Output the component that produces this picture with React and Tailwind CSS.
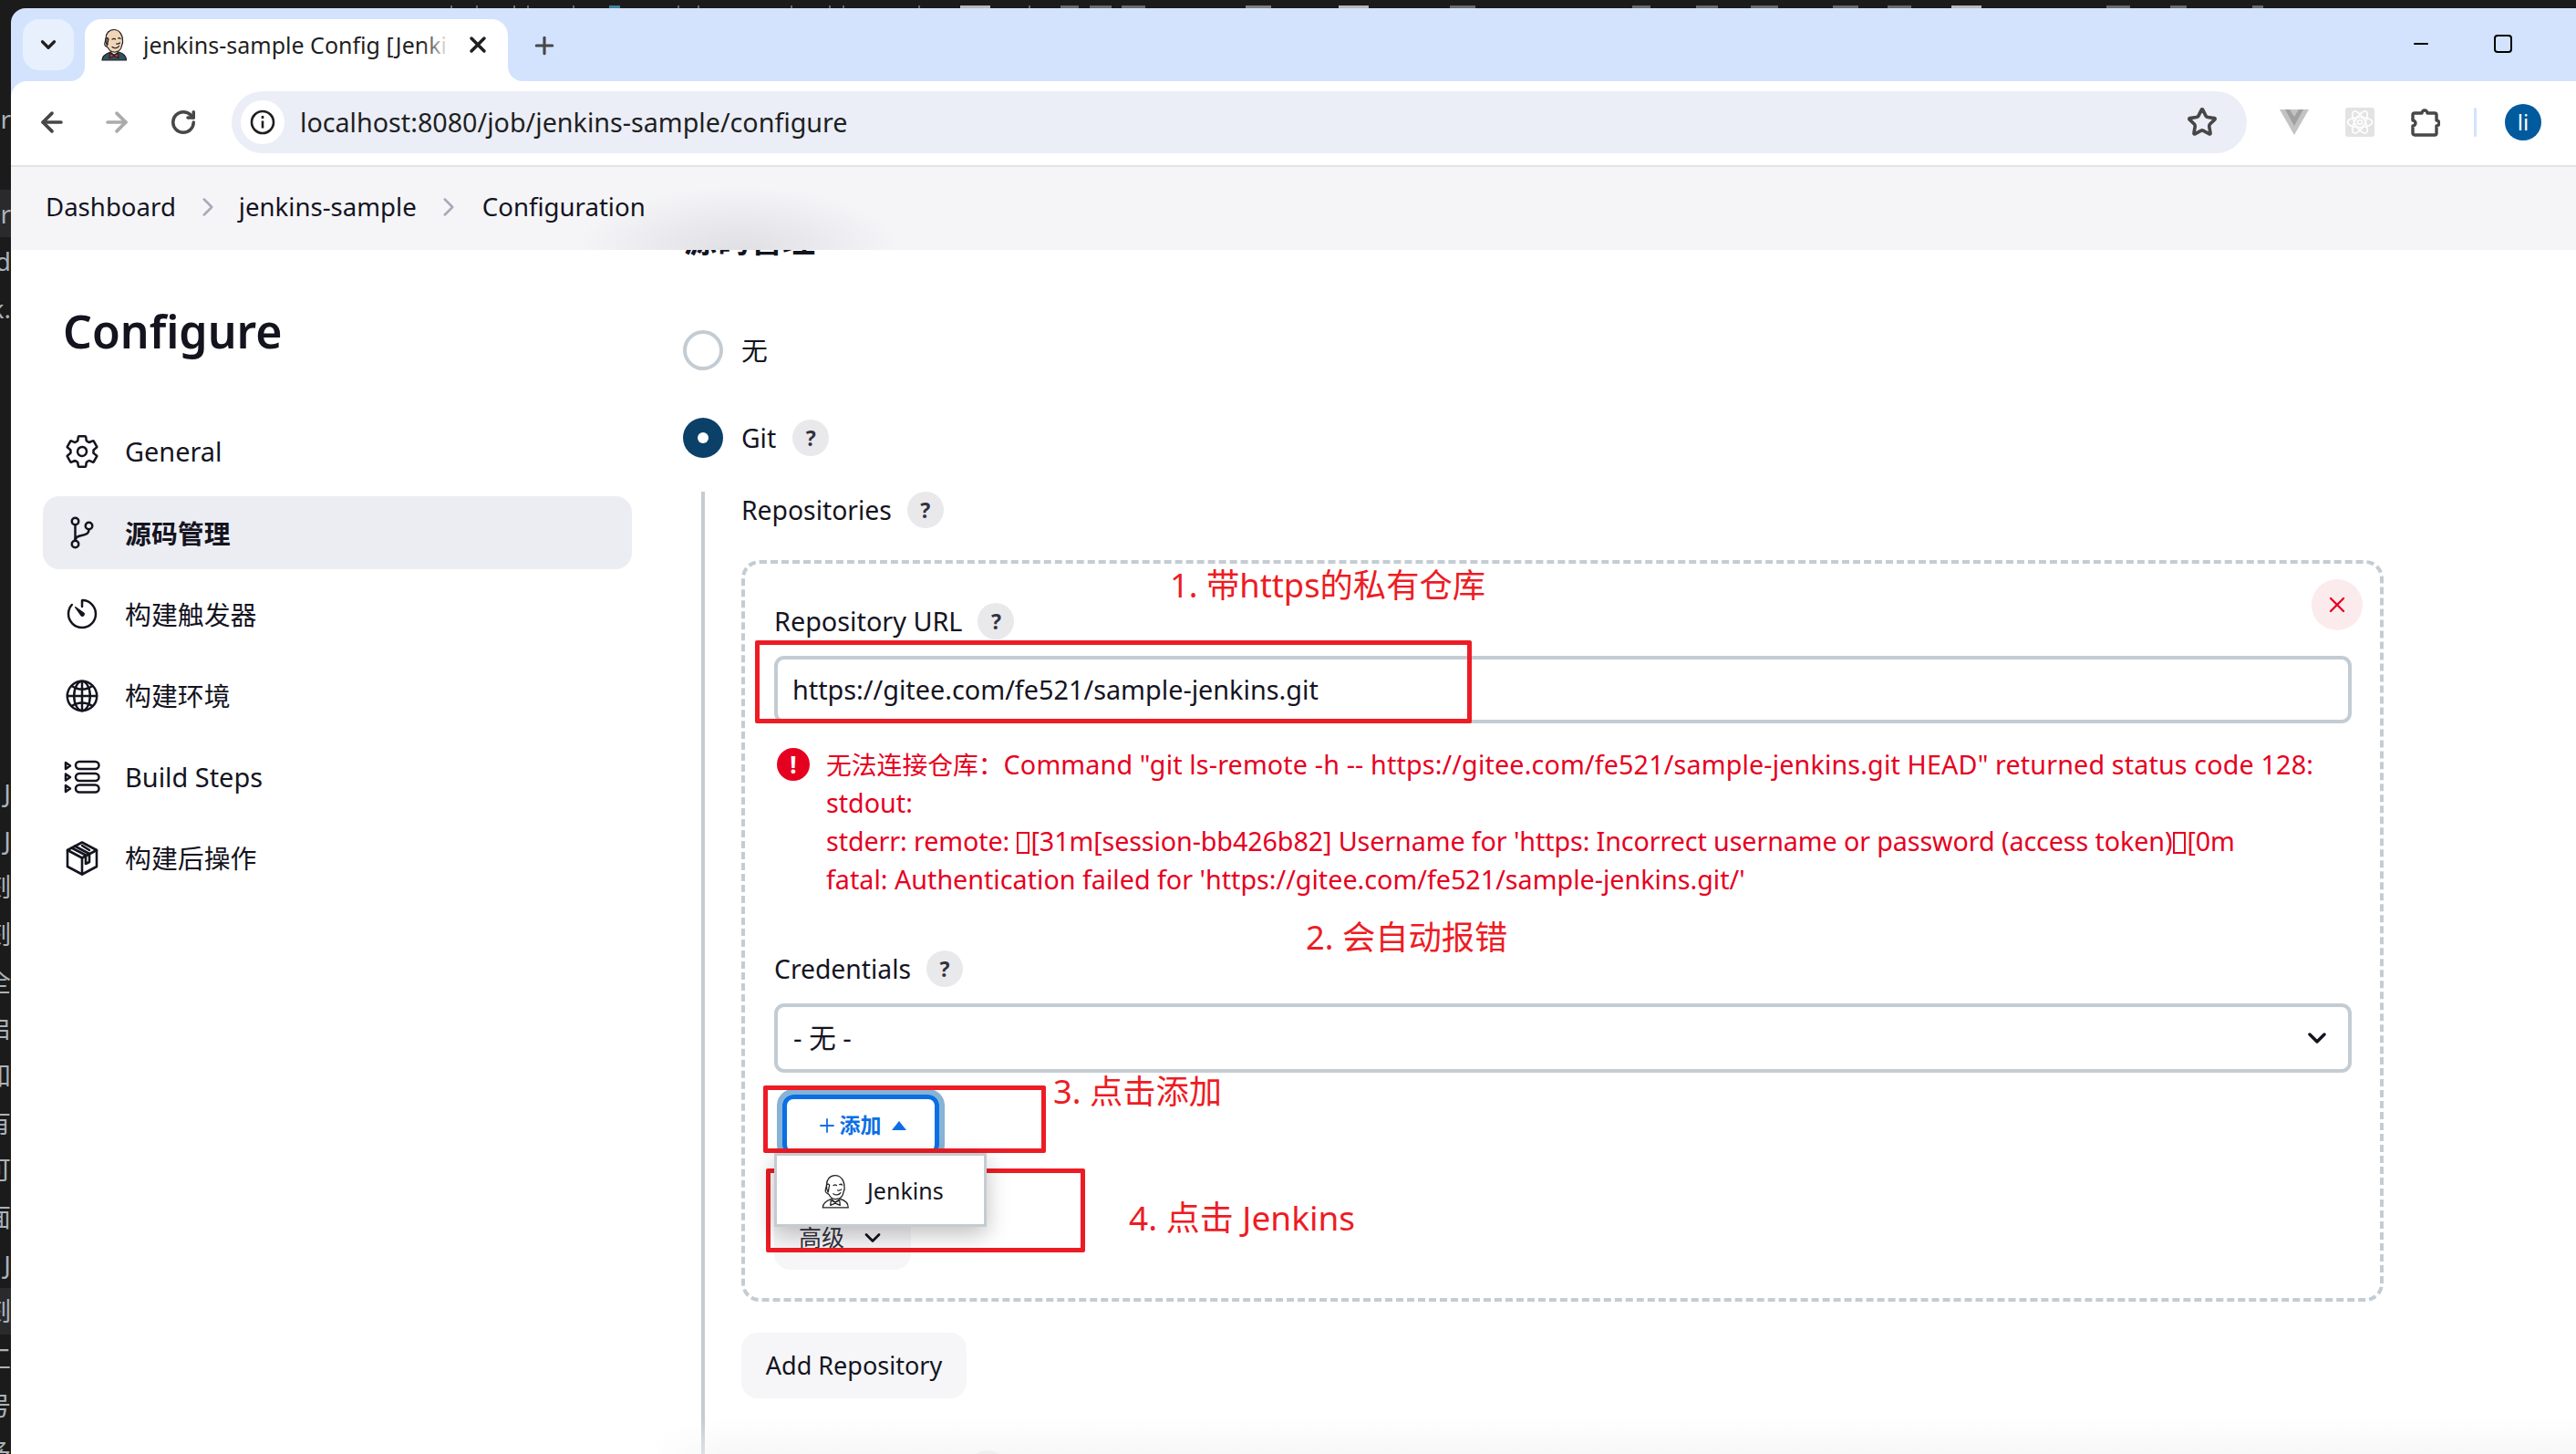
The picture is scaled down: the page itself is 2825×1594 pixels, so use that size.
import React from "react";
import { ArrowLeft, ArrowRight, RotateCw, Star, ChevronDown, ChevronRight, Plus, X, Minus } from "lucide-react";
import { IoSettingsOutline, IoGitBranchOutline, IoTimerOutline, IoGlobeOutline } from "react-icons/io5";

const Jenkins = ({ color, className }) => {
  const skin = color ? "#f0d6b7" : "#ffffff";
  const suit = color ? "#335061" : "#ffffff";
  const tie = color ? "#d33833" : "#ffffff";
  const hair = color ? "#8a8a8a" : "#ffffff";
  return (
    <svg viewBox="0 0 64 72" className={className} fill="none" stroke="#231f20" strokeWidth="2.4" strokeLinejoin="round" strokeLinecap="round">
      <path d="M6 70c0-9 7-14 18-18l8 7 10-7c11 3 17 8 17 18z" fill={suit} />
      <path d="M32 3c-11 0-18 8-18 20 0 5-4 9-2 14 2 4 5 3 7 6 4 7 10 10 16 9 8-1 13-7 14-14 1-3 3-6 2-11C51 13 43 3 32 3z" fill={skin} />
      <path d="M14 23c-1 6 1 11 3 15 2-5 1-10 3-14-1-3-4-4-6-1z" fill={hair} />
      <path d="M28 24c3-2 5-2 7 0M41 22c2-1 4-1 5 1M37 34c3 1 6 0 8-2M28 41c5 4 12 3 15-2" />
      <path d="M23 55l9 4 9-4 1 10-10-4-10 4z" fill={tie} />
    </svg>
  );
};

const Help = () => (
  <span className="flex h-[40px] w-[40px] shrink-0 items-center justify-center rounded-full bg-[#e9e9ec] text-[23px] font-bold text-[#33333d]">?</span>
);

const Tofu = () => <span className="mx-[1px] inline-block h-[24px] w-[14px] border-2 border-[#e6001f] align-[-3px]" />;

const BuildSteps = () => (
  <svg viewBox="0 0 40 40" className="h-[40px] w-[40px]" fill="none" stroke="#14141f" strokeWidth="2.5" strokeLinejoin="round">
    <path d="M2 4l5 3.500-5 3.500zM2 16.500l5 3.500-5 3.500zM2 29l5 3.500-5 3.500z" />
    <rect x="13" y="3" width="25.500" height="8" rx="4" />
    <rect x="13" y="16" width="25.500" height="8" rx="4" />
    <rect x="13" y="28.500" width="25.500" height="8" rx="4" />
  </svg>
);

const Cube = () => (
  <svg viewBox="0 0 40 40" className="h-[40px] w-[40px]" fill="none" stroke="#14141f" strokeWidth="2.6" strokeLinejoin="round" strokeLinecap="round">
    <path d="M20 2.500L36 11v18l-16 8.500L4 29V11z" />
    <path d="M4 11l16 8.500L36 11M20 19.500v18" />
    <path d="M12 6.500l16 8.500v9l-4 2v-9.500L8.500 8.500M20 6l8 5" />
  </svg>
);

const navItems = [
  { icon: <IoSettingsOutline className="h-[42px] w-[42px]" />, label: "General" },
  { icon: <IoGitBranchOutline className="h-[44px] w-[44px]" />, label: "源码管理", active: true },
  { icon: <IoTimerOutline className="h-[42px] w-[42px]" />, label: "构建触发器" },
  { icon: <IoGlobeOutline className="h-[42px] w-[42px]" />, label: "构建环境" },
  { icon: <BuildSteps />, label: "Build Steps" },
  { icon: <Cube />, label: "构建后操作" },
];

const upperLines = [[".r", ""], ["", ""], ["hr", "bg-[#2a2a2d]"], ["od", ""], ["k.", ""]];
const lowerLines = [
  ["J", ""], ["J", ""], ["刂刻", ""], ["刂刻", ""], ["安全", ""], ["重启", ""], ["告知", ""], ["只有", ""],
  ["只可", ""], ["面面", ""], ["J", ""], ["刂刻", "bg-[#2a2a2d]"], ["立工", ""], ["己号", ""], ["更多", ""],
];

const topMarks = [
  [494, 2, "#6a6a6a"], [522, 2, "#6a6a6a"], [563, 2, "#776"], [578, 2, "#6a6a6a"], [628, 2, "#6a6a6a"], [668, 12, "#3f7f9f"], [743, 2, "#6a6a6a"],
  [765, 2, "#6a6a6a"], [867, 2, "#6a6a6a"], [909, 2, "#6a6a6a"], [924, 2, "#6a6a6a"], [1007, 2, "#6a6a6a"], [1053, 33, "#b8b8b8"], [1128, 2, "#6a6a6a"],
  [1163, 20, "#6a6a6a"], [1195, 24, "#6a6a6a"], [1230, 26, "#6a6a6a"], [1366, 28, "#808080"], [1468, 33, "#b8b8b8"], [1590, 28, "#6a6a6a"],
  [1790, 20, "#6a6a6a"], [1860, 24, "#6a6a6a"], [1920, 30, "#6a6a6a"], [2010, 28, "#6a6a6a"], [2070, 26, "#6a6a6a"], [2140, 33, "#b8b8b8"],
  [2310, 26, "#6a6a6a"], [2380, 18, "#6a6a6a"], [2470, 12, "#6a6a6a"],
];

const Red = ({ className }) => <div className={"pointer-events-none absolute rounded-[2px] border-[5px] border-[#ed1c24] " + className} />;
const Note = ({ className, children }) => (
  <div className={"pointer-events-none absolute whitespace-nowrap leading-[48px] text-[#ed1c24] " + className}>{children}</div>
);

const StrayLine = ({ text, cls, h }) => (
  <div className={"flex items-center justify-end overflow-hidden whitespace-nowrap text-[28px] leading-none " + h + " " + cls}>
    <span className="shrink-0">{text}</span>
  </div>
);

export default function App() {
  return (
    <div className="relative h-[1594px] w-[2825px] overflow-hidden bg-[#1b1b1b] text-[#14141f] [font-family:'Noto_Sans','Noto_Sans_CJK_SC',sans-serif]">
      {/* stray marks of the window behind */}
      <div className="absolute left-0 right-0 top-[6px] h-[3px]">
        {topMarks.map(([x, w, c], i) => (
          <span key={i} className="absolute bottom-0 top-0" style={{ left: x, width: w, background: c }} />
        ))}
      </div>
      <div className="flex h-full">
        <div className="w-[12px] shrink-0 overflow-hidden pt-[104px] text-[#aab2ba]">
          {upperLines.map(([t, c], i) => <StrayLine key={i} text={t} cls={c} h="h-[52px]" />)}
          <div className="h-[479px]" />
          {lowerLines.map(([t, c], i) => <StrayLine key={i} text={t} cls={c} h="h-[51.700px]" />)}
        </div>

        <div className="mt-[9px] flex h-[1585px] min-w-0 flex-1 flex-col overflow-hidden rounded-tl-[16px] bg-[#d3e3fd]">
          {/* Tab strip */}
          <div className="flex h-[80px] shrink-0 items-start pl-[13px] pt-[12px]">
            <div className="flex h-[56px] w-[56px] items-center justify-center rounded-[18px] bg-[#e8f0fe]">
              <ChevronDown className="h-[26px] w-[26px] text-[#1f1f1f]" strokeWidth={3} />
            </div>
            <div className="relative ml-[12px] flex h-[68px] w-[464px] items-start rounded-t-[18px] bg-white pl-[16px] pt-[10px]">
              <div className="absolute bottom-0 left-[-16px] h-[16px] w-[16px] bg-white"><div className="h-full w-full rounded-br-[16px] bg-[#d3e3fd]" /></div>
              <div className="absolute bottom-0 right-[-16px] h-[16px] w-[16px] bg-white"><div className="h-full w-full rounded-bl-[16px] bg-[#d3e3fd]" /></div>
              <Jenkins color className="h-[36px] w-[32px] shrink-0" />
              <div className="relative ml-[16px] h-[36px] w-[336px] overflow-hidden whitespace-nowrap text-[25px] leading-[36px] text-[#1f1f1f]">
                jenkins-sample Config [Jenkins]
                <div className="absolute bottom-0 right-0 top-0 w-[30px] bg-gradient-to-r from-transparent to-white" />
              </div>
              <X className="ml-[17px] mt-[4px] h-[28px] w-[28px] shrink-0 text-[#1f1f1f]" strokeWidth={3} />
            </div>
            <Plus className="ml-[25px] mt-[14px] h-[30px] w-[30px] text-[#474747]" strokeWidth={2.5} />
            <div className="flex-1" />
            <Minus className="mt-[15px] h-[24px] w-[24px] text-black" strokeWidth={2} />
            <div className="ml-[68px] mr-[70px] mt-[17px] h-[20px] w-[20px] rounded-[4px] border-2 border-black" />
          </div>

          {/* Toolbar */}
          <div className="flex h-[94px] shrink-0 items-center rounded-tl-[18px] border-b-2 border-[#e3e3e3] bg-white pb-[2px]">
            <ArrowLeft className="ml-[28px] h-[34px] w-[34px] text-[#474747]" strokeWidth={2.6} />
            <ArrowRight className="ml-[37px] h-[34px] w-[34px] text-[#ababab]" strokeWidth={2.6} />
            <RotateCw className="ml-[41px] h-[30px] w-[30px] text-[#474747]" strokeWidth={2.8} />
            <div className="ml-[38px] flex h-[68px] w-[2210px] items-center rounded-full bg-[#ebeef7] pl-[10px]">
              <div className="flex h-[48px] w-[48px] items-center justify-center rounded-full bg-white">
                <svg viewBox="0 0 28 28" className="h-[28px] w-[28px]" fill="none" stroke="#1f1f1f" strokeWidth="2.6">
                  <circle cx="14" cy="14" r="12" />
                  <path d="M14 12.500v8M14 7v3" />
                </svg>
              </div>
              <span className="ml-[17px] text-[28.700px] text-[#1f1f1f]">localhost:8080/job/jenkins-sample/configure</span>
              <div className="flex-1" />
              <Star className="mr-[32px] h-[34px] w-[34px] text-[#474747]" strokeWidth={2.6} />
            </div>
            <svg viewBox="0 0 32 28" className="ml-[36px] h-[28px] w-[32px] shrink-0">
              <path d="M0 0h32L16 28z" fill="#c3c3c3" />
              <path d="M6 0h20L16 18z" fill="#a0a0a0" />
              <path d="M11 0h10l-5 8z" fill="#c3c3c3" />
            </svg>
            <div className="ml-[40px] flex h-[32px] w-[32px] shrink-0 items-center justify-center rounded-[3px] bg-[#e3e3e3]">
              <svg viewBox="0 0 32 32" className="h-[32px] w-[32px]" fill="none" stroke="#ffffff" strokeWidth="1.600">
                <ellipse cx="16" cy="16" rx="13.500" ry="5.500" />
                <ellipse cx="16" cy="16" rx="13.500" ry="5.500" transform="rotate(60 16 16)" />
                <ellipse cx="16" cy="16" rx="13.500" ry="5.500" transform="rotate(120 16 16)" />
                <circle cx="16" cy="16" r="2.500" />
              </svg>
            </div>
            <svg viewBox="0 0 34 34" className="ml-[38px] h-[34px] w-[34px] shrink-0" fill="none" stroke="#474747" strokeWidth="3.400" strokeLinejoin="round">
              <path d="M6 7h8a3 3 0 0 1 6 0h8a2 2 0 0 1 2 2v6a3 3 0 0 1 0 6v8a2 2 0 0 1-2 2H6a2 2 0 0 1-2-2v-8a3 3 0 0 0 0-6V9a2 2 0 0 1 2-2z" />
            </svg>
            <div className="ml-[37px] h-[32px] w-[3px] shrink-0 rounded-full bg-[#d3e3fd]" />
            <div className="ml-[31px] flex h-[40px] w-[40px] shrink-0 items-center justify-center rounded-full bg-[#005a9e] text-[24px] text-white">li</div>
          </div>

          {/* Page */}
          <div className="relative min-h-0 flex-1 overflow-hidden bg-white">
            <div className="absolute left-0 right-0 top-0 z-10 flex h-[91px] items-center bg-[#f5f5f8] pb-[3px] pl-[38px] text-[27.600px]">
              <div className="absolute bottom-0 left-[618px] h-[70px] w-[360px] bg-[radial-gradient(ellipse_at_bottom,#dfdfe4,transparent_70%)]" />
              <span className="relative">Dashboard</span>
              <ChevronRight className="relative ml-[18px] h-[34px] w-[34px] text-[#a9a9b8]" strokeWidth={1.800} />
              <span className="relative ml-[17px]">jenkins-sample</span>
              <ChevronRight className="relative ml-[18px] h-[34px] w-[34px] text-[#a9a9b8]" strokeWidth={1.800} />
              <span className="relative ml-[20px]">Configuration</span>
            </div>

            <div className="flex">
              {/* Sidebar */}
              <div className="ml-[35px] w-[646px] shrink-0 pt-[150px]">
                <h1 className="ml-[22px] h-[60px] text-[50px] font-semibold leading-[60px]">Configure</h1>
                <div className="mt-[62px] flex flex-col gap-[9.200px]">
                  {navItems.map((it) => (
                    <div key={it.label} className={"flex h-[80px] items-center rounded-[18px] pl-[23px] text-[28.900px] " + (it.active ? "bg-[#ecedf2] font-bold" : "")}>
                      <span className="flex w-[40px] shrink-0 justify-center">{it.icon}</span>
                      <span className="ml-[27px]">{it.label}</span>
                    </div>
                  ))}
                </div>
              </div>

              {/* Main */}
              <div className="ml-[56px] w-[1900px] shrink-0 pt-[59px] text-[28.300px]">
                <div className="ml-[1px] h-[44px] text-[36px] font-bold leading-[44px]">源码管理</div>

                <div className="mt-[76px] flex h-[44px] items-center">
                  <span className="h-[44px] w-[44px] shrink-0 rounded-full border-[4px] border-[#c4ccd3]" />
                  <span className="ml-[20px] text-[28.800px]">无</span>
                </div>
                <div className="mt-[52px] flex h-[44px] items-center">
                  <span className="flex h-[44px] w-[44px] shrink-0 items-center justify-center rounded-full bg-[#0b4168]">
                    <span className="h-[12px] w-[12px] rounded-full bg-white" />
                  </span>
                  <span className="ml-[20px]">Git</span>
                  <span className="ml-[18px]"><Help /></span>
                </div>

                <div className="ml-[20px] mt-[37px] border-l-4 border-[#c4ccd3] pl-[40px]">
                  <div className="flex h-[40px] items-center">
                    <span>Repositories</span>
                    <span className="ml-[17px]"><Help /></span>
                  </div>

                  <div className="relative mt-[35px] w-[1801px] rounded-[20px] border-4 border-dashed border-[#c4ccd3] px-[32px] pb-[31px] pt-[43px]">
                    <div className="absolute right-[19px] top-[17px] flex h-[56px] w-[56px] items-center justify-center rounded-full bg-[#fbebec]">
                      <X className="h-[28px] w-[28px] text-[#e6001f]" strokeWidth={2} />
                    </div>
                    <div className="flex h-[40px] items-center">
                      <span className="text-[28.800px]">Repository URL</span>
                      <span className="ml-[17px]"><Help /></span>
                    </div>
                    <div className="mt-[18px] flex h-[74px] w-[1730px] items-center rounded-[11px] border-4 border-[#c4ccd3] pl-[16px] text-[28.800px]">
                      https://gitee.com/fe521/sample-jenkins.git
                    </div>
                    <div className="mt-[24px] flex gap-[18px] pl-[3px] text-[#e6001f]">
                      <span className="mt-[3px] flex h-[36px] w-[36px] shrink-0 items-center justify-center rounded-full bg-[#e6001f] text-[26px] font-bold leading-none text-white">!</span>
                      <div className="text-[28.700px] leading-[42px]">
                        <div className="whitespace-nowrap tracking-[0.150px]"><span className="text-[27.800px] tracking-normal">无法连接仓库：</span>Command "git ls-remote -h -- https://gitee.com/fe521/sample-jenkins.git HEAD" returned status code 128:</div>
                        <div>stdout:</div>
                        <div className="whitespace-nowrap tracking-[-0.100px]">stderr: remote: <Tofu />[31m[session-bb426b82] Username for 'https: Incorrect username or password (access token)<Tofu />[0m</div>
                        <div className="whitespace-nowrap">fatal: Authentication failed for 'https://gitee.com/fe521/sample-jenkins.git/'</div>
                      </div>
                    </div>
                    <div className="mt-[57px] flex h-[40px] items-center">
                      <span>Credentials</span>
                      <span className="ml-[17px]"><Help /></span>
                    </div>
                    <div className="mt-[18px] flex h-[76px] w-[1730px] items-center justify-between rounded-[11px] border-4 border-[#c4ccd3] pl-[17px] pr-[18px]">
                      <span className="text-[29.500px]">- 无 -</span>
                      <ChevronDown className="h-[32px] w-[32px]" strokeWidth={2.6} />
                    </div>

                    <div className="relative ml-[9px] mt-[24px] flex h-[67px] w-[172px] items-center justify-center rounded-[12px] border-[5px] border-[#0b6fe4] text-[#0b6fe4] shadow-[0_0_0_6px_#86b3d6]">
                      <Plus className="h-[24px] w-[24px]" strokeWidth={1.800} />
                      <span className="ml-[2px] text-[23px] font-bold">添加</span>
                      <svg viewBox="0 0 16 10" className="ml-[11px] h-[10px] w-[16px]"><path d="M8 0l8 10H0z" fill="#0b6fe4" /></svg>
                      <div className="absolute left-[-14px] top-[59px] z-[5] flex h-[81px] w-[233px] items-center rounded-[1px] border-[3px] border-[#c3ccd2] bg-white pl-[47px] pt-[2px] text-[25px] text-[#14141f] shadow-[0_8px_24px_rgba(0,0,0,0.25)]">
                        <Jenkins className="h-[38px] w-[34px] shrink-0" />
                        <span className="ml-[18px]">Jenkins</span>
                      </div>
                    </div>

                    <div className="mt-[54px] flex h-[71px] w-[150px] items-center rounded-[18px] bg-[#f6f6f8] pl-[27px] text-[25px] text-[#33333d]">
                      <span>高级</span>
                      <ChevronDown className="ml-[17px] h-[28px] w-[28px] text-[#14141f]" strokeWidth={2.4} />
                    </div>
                  </div>

                  <div className="mt-[34px] flex h-[72px] w-[247px] items-center justify-center rounded-[18px] bg-[#f6f6f8] text-[27px]">Add Repository</div>
                  <div className="ml-[250px] mt-[57px] h-[40px] w-[40px] rounded-full bg-[#e4e4e6]" />
                </div>
              </div>
            </div>

            <div className="pointer-events-none absolute bottom-0 left-[700px] right-0 h-[40px] bg-gradient-to-b from-transparent to-[#f4f4f5]/70 [mask-image:linear-gradient(to_right,transparent,black_80px)]" />
          </div>
        </div>
      </div>

      {/* Annotations drawn on the screenshot */}
      <Red className="left-[828px] top-[702px] h-[91px] w-[786px]" />
      <Red className="left-[837px] top-[1190px] h-[74px] w-[310px]" />
      <Red className="left-[840px] top-[1281px] h-[92px] w-[350px]" />
      <Note className="left-[1283px] top-[617px] text-[36.300px]">1. 带https的私有仓库</Note>
      <Note className="left-[1432px] top-[1003px] text-[36.300px]">2. 会自动报错</Note>
      <Note className="left-[1155px] top-[1172px] text-[36.300px]">3. 点击添加</Note>
      <Note className="left-[1238px] top-[1311px] text-[37px]">4. 点击 Jenkins</Note>
    </div>
  );
}
